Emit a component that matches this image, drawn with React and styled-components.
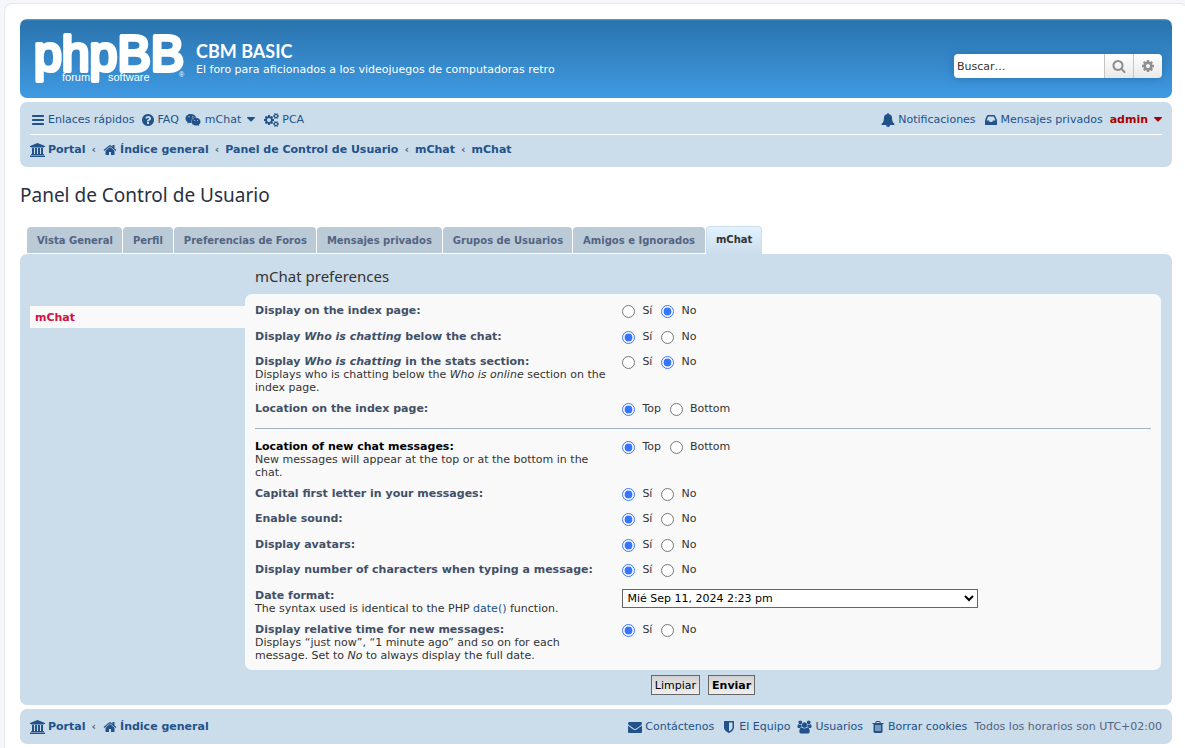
import styled, { createGlobalStyle, css } from 'styled-components'
import { useState } from 'react';
import { FaWeixin } from 'react-icons/fa';

const font = '"DejaVu Sans", Verdana, sans-serif';
const headingFont = '"Noto Sans", "Trebuchet MS", sans-serif';
const titleFont = 'Lato, "Trebuchet MS", sans-serif';

const blue = '#22528a';
const panelBlue = '#cbdcea';

const paths = {
    bars: 'M1664 1344v128q0 26-19 45t-45 19h-1408q-26 0-45-19t-19-45v-128q0-26 19-45t45-19h1408q26 0 45 19t19 45zm0-512v128q0 26-19 45t-45 19h-1408q-26 0-45-19t-19-45v-128q0-26 19-45t45-19h1408q26 0 45 19t19 45zm0-512v128q0 26-19 45t-45 19h-1408q-26 0-45-19t-19-45v-128q0-26 19-45t45-19h1408q26 0 45 19t19 45z',
    home: 'M1472 992v480q0 26-19 45t-45 19h-384v-384h-256v384h-384q-26 0-45-19t-19-45v-480q0-1 .5-3t.5-3l575-474 575 474q1 2 1 6zm223-69l-62 74q-8 9-21 11h-3q-13 0-21-7l-692-577-692 577q-12 8-24 7-13-2-21-11l-62-74q-8-10-7-23.500t11-21.500l719-599q32-26 76-26t76 26l244 204v-195q0-14 9-23t23-9h192q14 0 23 9t9 23v408l219 182q10 8 11 21.500t-7 23.500z',
    cog: 'M1152 896q0-106-75-181t-181-75-181 75-75 181 75 181 181 75 181-75 75-181zm512-109v222q0 12-8 23t-20 13l-185 28q-19 54-39 91 35 50 107 138 10 12 10 25t-9 23q-27 37-99 108t-94 71q-12 0-26-9l-138-108q-44 23-91 38-16 136-29 186-7 28-36 28h-222q-14 0-24.500-8.500t-11.500-21.500l-28-184q-49-16-90-37l-141 107q-10 9-25 9-14 0-25-11-126-114-165-168-7-10-7-23 0-12 8-23 15-21 51-66.500t54-70.500q-27-50-41-99l-183-27q-13-2-21-12.500t-8-23.500v-222q0-12 8-23t19-13l186-28q14-46 39-92-40-57-107-138-10-12-10-24 0-10 9-23 26-36 98.500-107.500t94.500-71.500q13 0 26 10l138 107q44-23 91-38 16-136 29-186 7-28 36-28h222q14 0 24.500 8.500t11.500 21.500l28 184q49 16 90 37l142-107q9-9 24-9 13 0 25 10 129 119 165 170 7 8 7 22 0 12-8 23-15 21-51 66.500t-54 70.500q26 50 41 98l183 28q13 2 21 12.500t8 23.500z',
    cogs: 'M896 896q0-106-75-181t-181-75-181 75-75 181 75 181 181 75 181-75 75-181zm768 512q0-52-38-90t-90-38-90 38-38 90q0 53 37.500 90.500t90.500 37.500 90.500-37.500 37.500-90.500zm0-1024q0-52-38-90t-90-38-90 38-38 90q0 53 37.500 90.500t90.500 37.500 90.500-37.500 37.500-90.500zm-384 421v185q0 10-7 19.500t-16 10.500l-155 24q-11 35-32 76 34 48 90 115 7 11 7 20 0 12-7 19-23 30-82.500 89.500t-78.500 59.500q-11 0-21-7l-115-90q-37 19-77 31-11 108-23 155-7 24-30 24h-186q-11 0-20-7.500t-10-17.500l-23-153q-34-10-75-31l-118 89q-7 7-20 7-11 0-21-8-144-133-144-160 0-9 7-19 10-14 41-53t47-61q-23-44-35-82l-152-24q-10-1-17-9.500t-7-19.500v-185q0-10 7-19.500t16-10.500l155-24q11-35 32-76-34-48-90-115-7-11-7-20 0-12 7-20 22-30 82-89t79-59q11 0 21 7l115 90q34-18 77-32 11-108 23-154 7-24 30-24h186q11 0 20 7.500t10 17.500l23 153q34 10 75 31l118-89q8-7 20-7 11 0 21 8 144 133 144 160 0 8-7 19-12 16-42 54t-45 60q23 48 34 82l152 23q10 2 17 10.500t7 19.500zm640 533v140q0 16-149 31-12 27-30 52 51 113 51 138 0 4-4 7-122 71-124 71-8 0-46-47t-52-68q-20 2-30 2t-30-2q-14 21-52 68t-46 47q-2 0-124-71-4-3-4-7 0-25 51-138-18-25-30-52-149-15-149-31v-140q0-16 149-31 13-29 30-52-51-113-51-138 0-4 4-7 4-2 35-20t59-34 30-16q8 0 46 46.500t52 67.500q20-2 30-2t30 2q51-71 92-112l6-2q4 0 124 70 4 3 4 7 0 25-51 138 17 23 30 52 149 15 149 31zm0-1024v140q0 16-149 31-12 27-30 52 51 113 51 138 0 4-4 7-122 71-124 71-8 0-46-47t-52-68q-20 2-30 2t-30-2q-14 21-52 68t-46 47q-2 0-124-71-4-3-4-7 0-25 51-138-18-25-30-52-149-15-149-31v-140q0-16 149-31 13-29 30-52-51-113-51-138 0-4 4-7 4-2 35-20t59-34 30-16q8 0 46 46.500t52 67.500q20-2 30-2t30 2q51-71 92-112l6-2q4 0 124 70 4 3 4 7 0 25-51 138 17 23 30 52 149 15 149 31z',
    search: 'M1216 832q0-185-131.500-316.500t-316.500-131.500-316.500 131.500-131.500 316.500 131.500 316.500 316.500 131.500 316.500-131.500 131.500-316.500zm512 832q0 52-38 90t-90 38q-54 0-90-38l-343-342q-179 124-399 124-143 0-273.500-55.500t-225-150-150-225-55.500-273.500 55.500-273.500 150-225 225-150 273.500-55.500 273.500 55.500 225 150 150 225 55.500 273.500q0 220-124 399l343 343q37 37 37 90z',
    question: 'M1024 1376v-192q0-14-9-23t-23-9h-192q-14 0-23 9t-9 23v192q0 14 9 23t23 9h192q14 0 23-9t9-23zm256-672q0-88-55.500-163t-138.500-116-170-41q-243 0-371 213-15 24 8 42l132 100q7 6 19 6 16 0 25-12 53-68 86-92 34-24 86-24 48 0 85.500 26t37.500 59q0 38-20 61t-68 45q-63 28-115.500 86.500t-52.500 125.500v36q0 14 9 23t23 9h192q14 0 23-9t9-23q0-19 21.500-49.500t54.500-49.500q32-18 49-28.500t46-35 44.500-48 28-60.500 12.500-81zm384 192q0 209-103 385.500t-279.500 279.500-385.500 103-385.500-103-279.500-279.500-103-385.500 103-385.500 279.500-279.500 385.500-103 385.500 103 279.500 279.500 103 385.500z',
    trash: 'M704 1376v-704q0-14-9-23t-23-9h-64q-14 0-23 9t-9 23v704q0 14 9 23t23 9h64q14 0 23-9t9-23zm256 0v-704q0-14-9-23t-23-9h-64q-14 0-23 9t-9 23v704q0 14 9 23t23 9h64q14 0 23-9t9-23zm256 0v-704q0-14-9-23t-23-9h-64q-14 0-23 9t-9 23v704q0 14 9 23t23 9h64q14 0 23-9t9-23zm-544-992h448l-48-117q-7-9-17-11h-317q-10 2-17 11zm928 32v64q0 14-9 23t-23 9h-96v948q0 83-47 143.500t-113 60.500h-832q-66 0-113-58.500t-47-141.500v-952h-96q-14 0-23-9t-9-23v-64q0-14 9-23t23-9h309l70-167q15-37 54-63t79-26h320q40 0 79 26t54 63l70 167h309q14 0 23 9t9 23z',
    inbox: 'M1151 960h316q-1-3-2.500-8.500t-2.500-7.500l-212-496h-708l-212 496q-1 3-2.500 8.500t-2.500 7.500h316l95 192h320zm513 30v482q0 26-19 45t-45 19h-1408q-26 0-45-19t-19-45v-482q0-62 25-123l238-552q10-25 36.500-42t52.500-17h832q26 0 52.500 17t36.500 42l238 552q25 61 25 123z',
    envelope: 'M1792 710v794q0 66-47 113t-113 47h-1472q-66 0-113-47t-47-113v-794q44 49 101 87 362 246 497 345 57 42 92.500 65.500t94.500 48 110 24.500h2q51 0 110-24.500t94.500-48 92.500-65.500q170-123 498-345 57-39 100-87zm0-294q0 79-49 151t-122 123q-376 261-468 325-10 7-42.500 30.500t-54 38-52 32.500-57.500 27-50 9h-2q-23 0-50-9t-57.500-27-52-32.500-54-38-42.500-30.500q-91-64-262-182.500t-205-142.500q-62-42-117-115.500t-55-136.500q0-78 41.500-130t118.500-52h1472q65 0 112.500 47t47.500 113z',
    shield: 'M1344 960v-640h-448v1137q119-63 213-137 235-184 235-360zm192-768v768q0 86-33.500 170.500t-83 150-118 127.500-126.500 103-121 77.500-89.500 49.500-42.500 20q-12 6-26 6t-26-6q-16-7-42.500-20t-89.500-49.500-121-77.500-126.500-103-118-127.500-83-150-33.500-170.500v-768q0-26 19-45t45-19h1152q26 0 45 19t19 45z',
    users: 'M657 896q-162 5-265 128h-134q-82 0-138-40.500t-56-118.500q0-353 124-353 6 0 43.500 21t97.500 42.500 119 21.500q67 0 133-23-5 37-5 66 0 139 81 256zm1071 637q0 120-73 189.500t-194 69.500h-874q-121 0-194-69.500t-73-189.500q0-53 3.500-103.500t14-109 26.500-108.500 43-97.500 62-81 85.500-53.500 111.500-20q10 0 43 21.500t73 48 107 48 135 21.500 135-21.500 107-48 73-48 43-21.500q61 0 111.500 20t85.500 53.500 62 81 43 97.500 26.500 108.500 14 109 3.500 103.500zm-1024-1277q0 106-75 181t-181 75-181-75-75-181 75-181 181-75 181 75 75 181zm704 384q0 159-112.500 271.500t-271.500 112.500-271.500-112.500-112.500-271.500 112.500-271.500 271.500-112.500 271.500 112.500 112.500 271.500zm576 225q0 78-56 118.500t-138 40.500h-134q-103-123-265-128 81-117 81-256 0-29-5-66 66 23 133 23 59 0 119-21.500t97.500-42.500 43.500-21q124 0 124 353zm-128-609q0 106-75 181t-181 75-181-75-75-181 75-181 181-75 181 75 75 181z',
    university: 'M960 0l960 384v128h-128q0 26-20.500 45t-48.500 19h-1526q-28 0-48.500-19t-20.500-45h-128v-128zm-704 640h256v768h128v-768h256v768h128v-768h256v768h128v-768h256v768h59q28 0 48.500 19t20.500 45v64h-1664v-64q0-26 20.500-45t48.500-19h59v-768zm1595 960q28 0 48.500 19t20.500 45v128h-1920v-128q0-26 20.500-45t48.500-19h1782z',
    bell: 'M912 1696q0-16-16-16-59 0-101.500-42.500t-42.500-101.500q0-16-16-16t-16 16q0 73 51.500 124.500t124.500 51.500q16 0 16-16zm816-288q0 52-38 90t-90 38h-448q0 106-75 181t-181 75-181-75-75-181h-448q-52 0-90-38t-38-90q50-42 91-88t85-119.500 74.500-158.500 50-206 19.500-260q0-152 117-282.500t307-158.500q-8-19-8-39 0-40 28-68t68-28 68 28 28 68q0 20-8 39 190 28 307 158.500t117 282.500q0 139 19.500 260t50 206 74.500 158.500 85 119.500 91 88z',
}

const viewBoxes = {
    users: '0 0 2048 1792',
    university: '0 0 1920 1792',
    cogs: '0 0 1920 1792',
}

const Icon = ({ name }) => (
    <IconSvg viewBox={viewBoxes[name] || '0 0 1792 1792'} $wide={name in viewBoxes} aria-hidden="true">
        <path d={paths[name]} />
    </IconSvg>
)

const Caret = () => (
    <CaretSvg viewBox="0 0 8 5" aria-hidden="true">
        <path d="M.5 0h7q.8.300.3 1L4.400 4.600q-.4.300-.8 0L.2 1Q-.2.300.5 0z" />
    </CaretSvg>
)

const TextLink = styled.a`
    color: #105289;
`

const tabs = ['Vista General', 'Perfil', 'Preferencias de Foros', 'Mensajes privados', 'Grupos de Usuarios', 'Amigos e Ignorados', 'mChat'];

const yesNo = ['Sí', 'No'];
const topBottom = ['Top', 'Bottom'];

const indexOptions = [
    { id: 'index', title: 'Display on the index page:', options: yesNo, value: 'No' },
    { id: 'whois', title: <>Display <em>Who is chatting</em> below the chat:</>, options: yesNo, value: 'Sí' },
    {
        id: 'stats', title: <>Display <em>Who is chatting</em> in the stats section:</>, options: yesNo, value: 'No',
        text: <>Displays who is chatting below the <em>Who is online</em> section on the index page.</>
    },
    { id: 'location', title: 'Location on the index page:', options: topBottom, value: 'Top' },
];

const messageOptions = [
    {
        id: 'newest', title: 'Location of new chat messages:', options: topBottom, value: 'Top', active: true,
        text: 'New messages will appear at the top or at the bottom in the chat.'
    },
    { id: 'capital', title: 'Capital first letter in your messages:', options: yesNo, value: 'Sí' },
    { id: 'sound', title: 'Enable sound:', options: yesNo, value: 'Sí' },
    { id: 'avatars', title: 'Display avatars:', options: yesNo, value: 'Sí' },
    { id: 'count', title: 'Display number of characters when typing a message:', options: yesNo, value: 'Sí' },
    {
        id: 'date', title: 'Date format:',
        text: <>The syntax used is identical to the PHP <TextLink href="#date">date()</TextLink> function.</>
    },
    {
        id: 'relative', title: 'Display relative time for new messages:', options: yesNo, value: 'Sí',
        text: <>Displays “just now”, “1 minute ago” and so on for each message. Set to <em>No</em> to always display the full date.</>
    },
];

function Option({ id, title, text, options, value, active }) {
    const [selected, setSelected] = useState(value);

    return (
        <Row>
            <dt>
                <RowTitle as={options ? 'strong' : 'label'} htmlFor={options ? undefined : id} id={`${id}-title`} $active={active}>{title}</RowTitle>
                {text && <div>{text}</div>}
            </dt>
            <Field role={options ? 'radiogroup' : undefined} aria-labelledby={options ? `${id}-title` : undefined}>
                {options ? options.map((o) => (
                    <RadioLabel key={o}>
                        <Radio name={id} value={o} checked={selected === o} onChange={() => { setSelected(o); }} />
                        {o}
                    </RadioLabel>
                )) : (
                    <Select id={id}>
                        <option>Mié Sep 11, 2024 2:23 pm</option>
                    </Select>
                )}
            </Field>
        </Row>
    )
}

function Logo() {
    return (
        <LogoSvg viewBox="0 0 152 52" role="img" aria-label="phpBB forum software">
            <text x="0" y="38" fontSize="50" stroke="#fff" strokeWidth="4" strokeLinejoin="round">phpBB</text>
            <text x="28" y="48" fontSize="11">forum</text>
            <text x="74" y="48" fontSize="11">software</text>
            <text x="145" y="44" fontSize="7">®</text>
        </LogoSvg>
    )
}

function App() {
    return (
        <>
            <GlobalStyle />
            <Wrap>
                <Header>
                    <a href="#portal"><Logo /></a>
                    <SiteText>
                        <SiteTitle>CBM BASIC</SiteTitle>
                        <p>El foro para aficionados a los videojuegos de computadoras retro</p>
                    </SiteText>
                    <Search onSubmit={(e) => { e.preventDefault(); }}>
                        <SearchInput type="search" placeholder="Buscar…" aria-label="Buscar" />
                        <SearchButton type="submit" aria-label="Buscar"><Icon name="search" /></SearchButton>
                        <SearchButton type="button" aria-label="Búsqueda avanzada"><Icon name="cog" /></SearchButton>
                    </Search>
                </Header>

                <Navbar>
                    <NavRow>
                        <NavLink href="#quick"><Icon name="bars" />Enlaces rápidos</NavLink>
                        <NavLink href="#faq"><Icon name="question" />FAQ</NavLink>
                        <NavLink href="#mchat"><BrandIcon as={FaWeixin} />mChat<Caret /></NavLink>
                        <NavLink href="#pca"><Icon name="cogs" />PCA</NavLink>
                        <Right>
                            <NavLink href="#notifications"><Icon name="bell" />Notificaciones</NavLink>
                            <NavLink href="#pm"><Icon name="inbox" />Mensajes privados</NavLink>
                            <UserLink href="#admin">admin<Caret /></UserLink>
                        </Right>
                    </NavRow>
                    <Crumbs>
                        <NavLink href="#portal"><Icon name="university" />Portal</NavLink>
                        <span>‹</span>
                        <NavLink href="#index"><Icon name="home" />Índice general</NavLink>
                        <span>‹</span>
                        <NavLink href="#ucp">Panel de Control de Usuario</NavLink>
                        <span>‹</span>
                        <NavLink href="#mchat">mChat</NavLink>
                        <span>‹</span>
                        <NavLink href="#settings">mChat</NavLink>
                    </Crumbs>
                </Navbar>

                <PageTitle>Panel de Control de Usuario</PageTitle>

                <Tabs>
                    {tabs.map((tab) => <Tab key={tab} href="#tab" $active={tab === 'mChat'}>{tab}</Tab>)}
                </Tabs>

                <Panel>
                    <Menu>
                        <MenuLink href="#mchat">mChat</MenuLink>
                    </Menu>
                    <Main>
                        <SectionTitle>mChat preferences</SectionTitle>
                        <Inner>
                            <dl>{indexOptions.map((o) => <Option key={o.id} {...o} />)}</dl>
                            <Divider />
                            <dl>{messageOptions.map((o) => <Option key={o.id} {...o} />)}</dl>
                        </Inner>
                        <Buttons>
                            <Button type="reset">Limpiar</Button>
                            <Button type="submit" $bold>Enviar</Button>
                        </Buttons>
                    </Main>
                </Panel>

                <Footer>
                    <Crumbs>
                        <NavLink href="#portal"><Icon name="university" />Portal</NavLink>
                        <span>‹</span>
                        <NavLink href="#index"><Icon name="home" />Índice general</NavLink>
                    </Crumbs>
                    <Right>
                        <NavLink href="#contact"><Icon name="envelope" />Contáctenos</NavLink>
                        <NavLink href="#team"><Icon name="shield" />El Equipo</NavLink>
                        <NavLink href="#members"><Icon name="users" />Usuarios</NavLink>
                        <NavLink href="#cookies"><Icon name="trash" />Borrar cookies</NavLink>
                        <span>Todos los horarios son UTC+02:00</span>
                    </Right>
                </Footer>
            </Wrap>
        </>
    )
}

const GlobalStyle = createGlobalStyle`
    * {
        box-sizing: border-box;
        margin: 0;
        padding: 0;
    }
    html {
        background-color: #f5f7fa;
        overflow-x: hidden;
    }
    body {
        padding: 3px 0 12px 4px;
        font-family: ${font};
        font-size: 11px;
        line-height: 13px;
        color: #333;
        overflow: hidden;
    }
    a {
        text-decoration: none;
    }
`

const Wrap = styled.div`
    margin-right: -3px;
    padding: 15px;
    border: 1px solid #e6e9ed;
    border-radius: 8px;
    background-color: #fff;
`

const IconSvg = styled.svg`
    flex: none;
    width: ${(p) => p.$wide ? 15 : 14}px;
    height: 14px;
    margin: 0 3px 0 ${(p) => p.$wide ? 0 : 1}px;
    fill: currentColor;
`

const CaretSvg = styled.svg`
    flex: none;
    width: 8px;
    height: 5px;
    margin: 0 4px 0 6px;
    fill: currentColor;
`

const BrandIcon = styled.svg`
    flex: none;
    width: 16px;
    height: 14px;
    margin: 0 4px 0 1px;
`

const Header = styled.header`
    display: flex;
    align-items: flex-start;
    height: 79px;
    padding: 14px 10px 0 14px;
    border-radius: 7px;
    color: #fff;
    background: linear-gradient(to bottom, #4ba7dc 0, #2a74ae 2px, #3f9ae2 78px);
`

const LogoSvg = styled.svg`
    display: block;
    width: 152px;
    height: 52px;
    overflow: visible;
    fill: #fff;
    font-family: "Liberation Sans", Arial, sans-serif;
`

const SiteText = styled.div`
    padding: 6px 0 0 10px;
`

const SiteTitle = styled.h1`
    font-family: ${titleFont};
    font-size: 18px;
    line-height: 24px;
`

const Search = styled.form`
    display: flex;
    margin: 21px 0 0 auto;
    border-radius: 4px;
    overflow: hidden;
    box-shadow: 0 0 10px #2a74ae;
`

const SearchInput = styled.input`
    width: 150px;
    height: 24px;
    padding: 3px;
    border: none;
    background-color: #fff;
    font-family: ${font};
    font-size: 11px;
    color: #333;
    &::placeholder {
        color: #333;
    }
`

const SearchButton = styled.button`
    display: flex;
    align-items: center;
    justify-content: center;
    width: 29px;
    height: 24px;
    border: none;
    border-left: 1px solid #c7c3bf;
    background: linear-gradient(to bottom, #fff, #e9e9e9);
    color: #8f8f8f;
    svg {
        margin: 0;
    }
`

const bar = css`
    border-radius: 7px;
    background-color: ${panelBlue};
`

const Navbar = styled.nav`
    ${bar}
    margin-top: 4px;
    padding: 3px 10px;
`

const NavRow = styled.div`
    display: flex;
    align-items: center;
    gap: 5px;
    height: 30px;
    border-bottom: 1px solid #fff;
`

const NavLink = styled.a`
    display: flex;
    align-items: center;
    color: ${blue};
`

const UserLink = styled(NavLink)`
    font-weight: bold;
    color: #aa0000;
    svg {
        margin-right: 0;
    }
`

const Right = styled.div`
    display: flex;
    align-items: center;
    gap: 7px;
    margin-left: auto;
    color: #536482;
`

const Crumbs = styled.div`
    display: flex;
    align-items: center;
    gap: 6px;
    height: 29px;
    font-weight: bold;
    color: #536482;
`

const PageTitle = styled.h2`
    margin: 16px 0 19px;
    font-family: ${headingFont};
    font-size: 19px;
    font-weight: normal;
    line-height: 24px;
    color: #28313f;
`

const Tabs = styled.nav`
    display: flex;
    align-items: flex-end;
    gap: 1px;
    padding-left: 7px;
`

const Tab = styled.a`
    margin-bottom: 1px;
    padding: 7px 9px 6px 10px;
    border-radius: 4px 4px 0 0;
    font-size: 10px;
    font-weight: bold;
    color: #536482;
    background-color: #bacad7;
    &:nth-child(even) {
        padding-right: 10px;
    }
    ${(p) => p.$active && css`
        margin-bottom: 0;
        padding: 6px 9px 8px;
        border: 1px solid ${panelBlue};
        border-bottom: none;
        color: #333;
        background: linear-gradient(to bottom, #e2f2ff, ${panelBlue});
    `}
`

const Panel = styled.div`
    ${bar}
    display: flex;
    padding: 10px 11px 10px 10px;
`

const Menu = styled.nav`
    width: 215px;
    padding-top: 42px;
`

const MenuLink = styled.a`
    display: block;
    padding: 5px 5px 4px;
    font-weight: bold;
    color: #d31141;
    background-color: #f9f9f9;
`

const Main = styled.form`
    flex: 1;
`

const SectionTitle = styled.h3`
    padding: 2px 10px 8px;
    font-family: ${headingFont};
    font-size: 15px;
    font-weight: normal;
    line-height: 20px;
`

const Inner = styled.div`
    padding: 10px 10px 0;
    border-radius: 7px;
    background-color: #f9f9f9;
`

const Row = styled.div`
    display: grid;
    grid-template-columns: 40% 1fr;
    column-gap: 9px;
    min-height: 25px;
    padding-bottom: 8px;
    &:nth-child(odd) {
        min-height: 26px;
    }
`

const RowTitle = styled.strong`
    display: block;
    font-weight: bold;
    color: ${(p) => p.$active ? '#000' : '#425067'};
`

const Field = styled.dd`
    display: flex;
    align-items: flex-start;
    gap: 9px;
`

const RadioLabel = styled.label`
    display: flex;
    gap: 7px;
`

const Radio = styled.input.attrs({ type: 'radio' })`
    width: 13px;
    height: 13px;
    margin-top: 1px;
    accent-color: #3875ff;
`

const Select = styled.select`
    width: 356px;
    height: 19px;
    border: 1px solid #666;
    border-radius: 0;
    background-color: #fff;
    font-family: ${font};
    font-size: 11px;
    color: #000;
`

const Divider = styled.hr`
    margin: 1px 0 11px;
    border: none;
    border-top: 1px solid #a3b3c4;
`

const Buttons = styled.div`
    display: flex;
    justify-content: center;
    gap: 8px;
    padding-top: 5px;
`

const Button = styled.button`
    height: 20px;
    padding: 0 3px;
    border: 1px solid #666;
    background: linear-gradient(to bottom, #d2d2d2, #efefef);
    font-family: ${font};
    font-size: 11px;
    font-weight: ${(p) => p.$bold ? 'bold' : 'normal'};
    color: #000;
`

const Footer = styled.footer`
    ${bar}
    display: flex;
    align-items: center;
    margin-top: 4px;
    padding: 3px 10px;
`

export default App;
